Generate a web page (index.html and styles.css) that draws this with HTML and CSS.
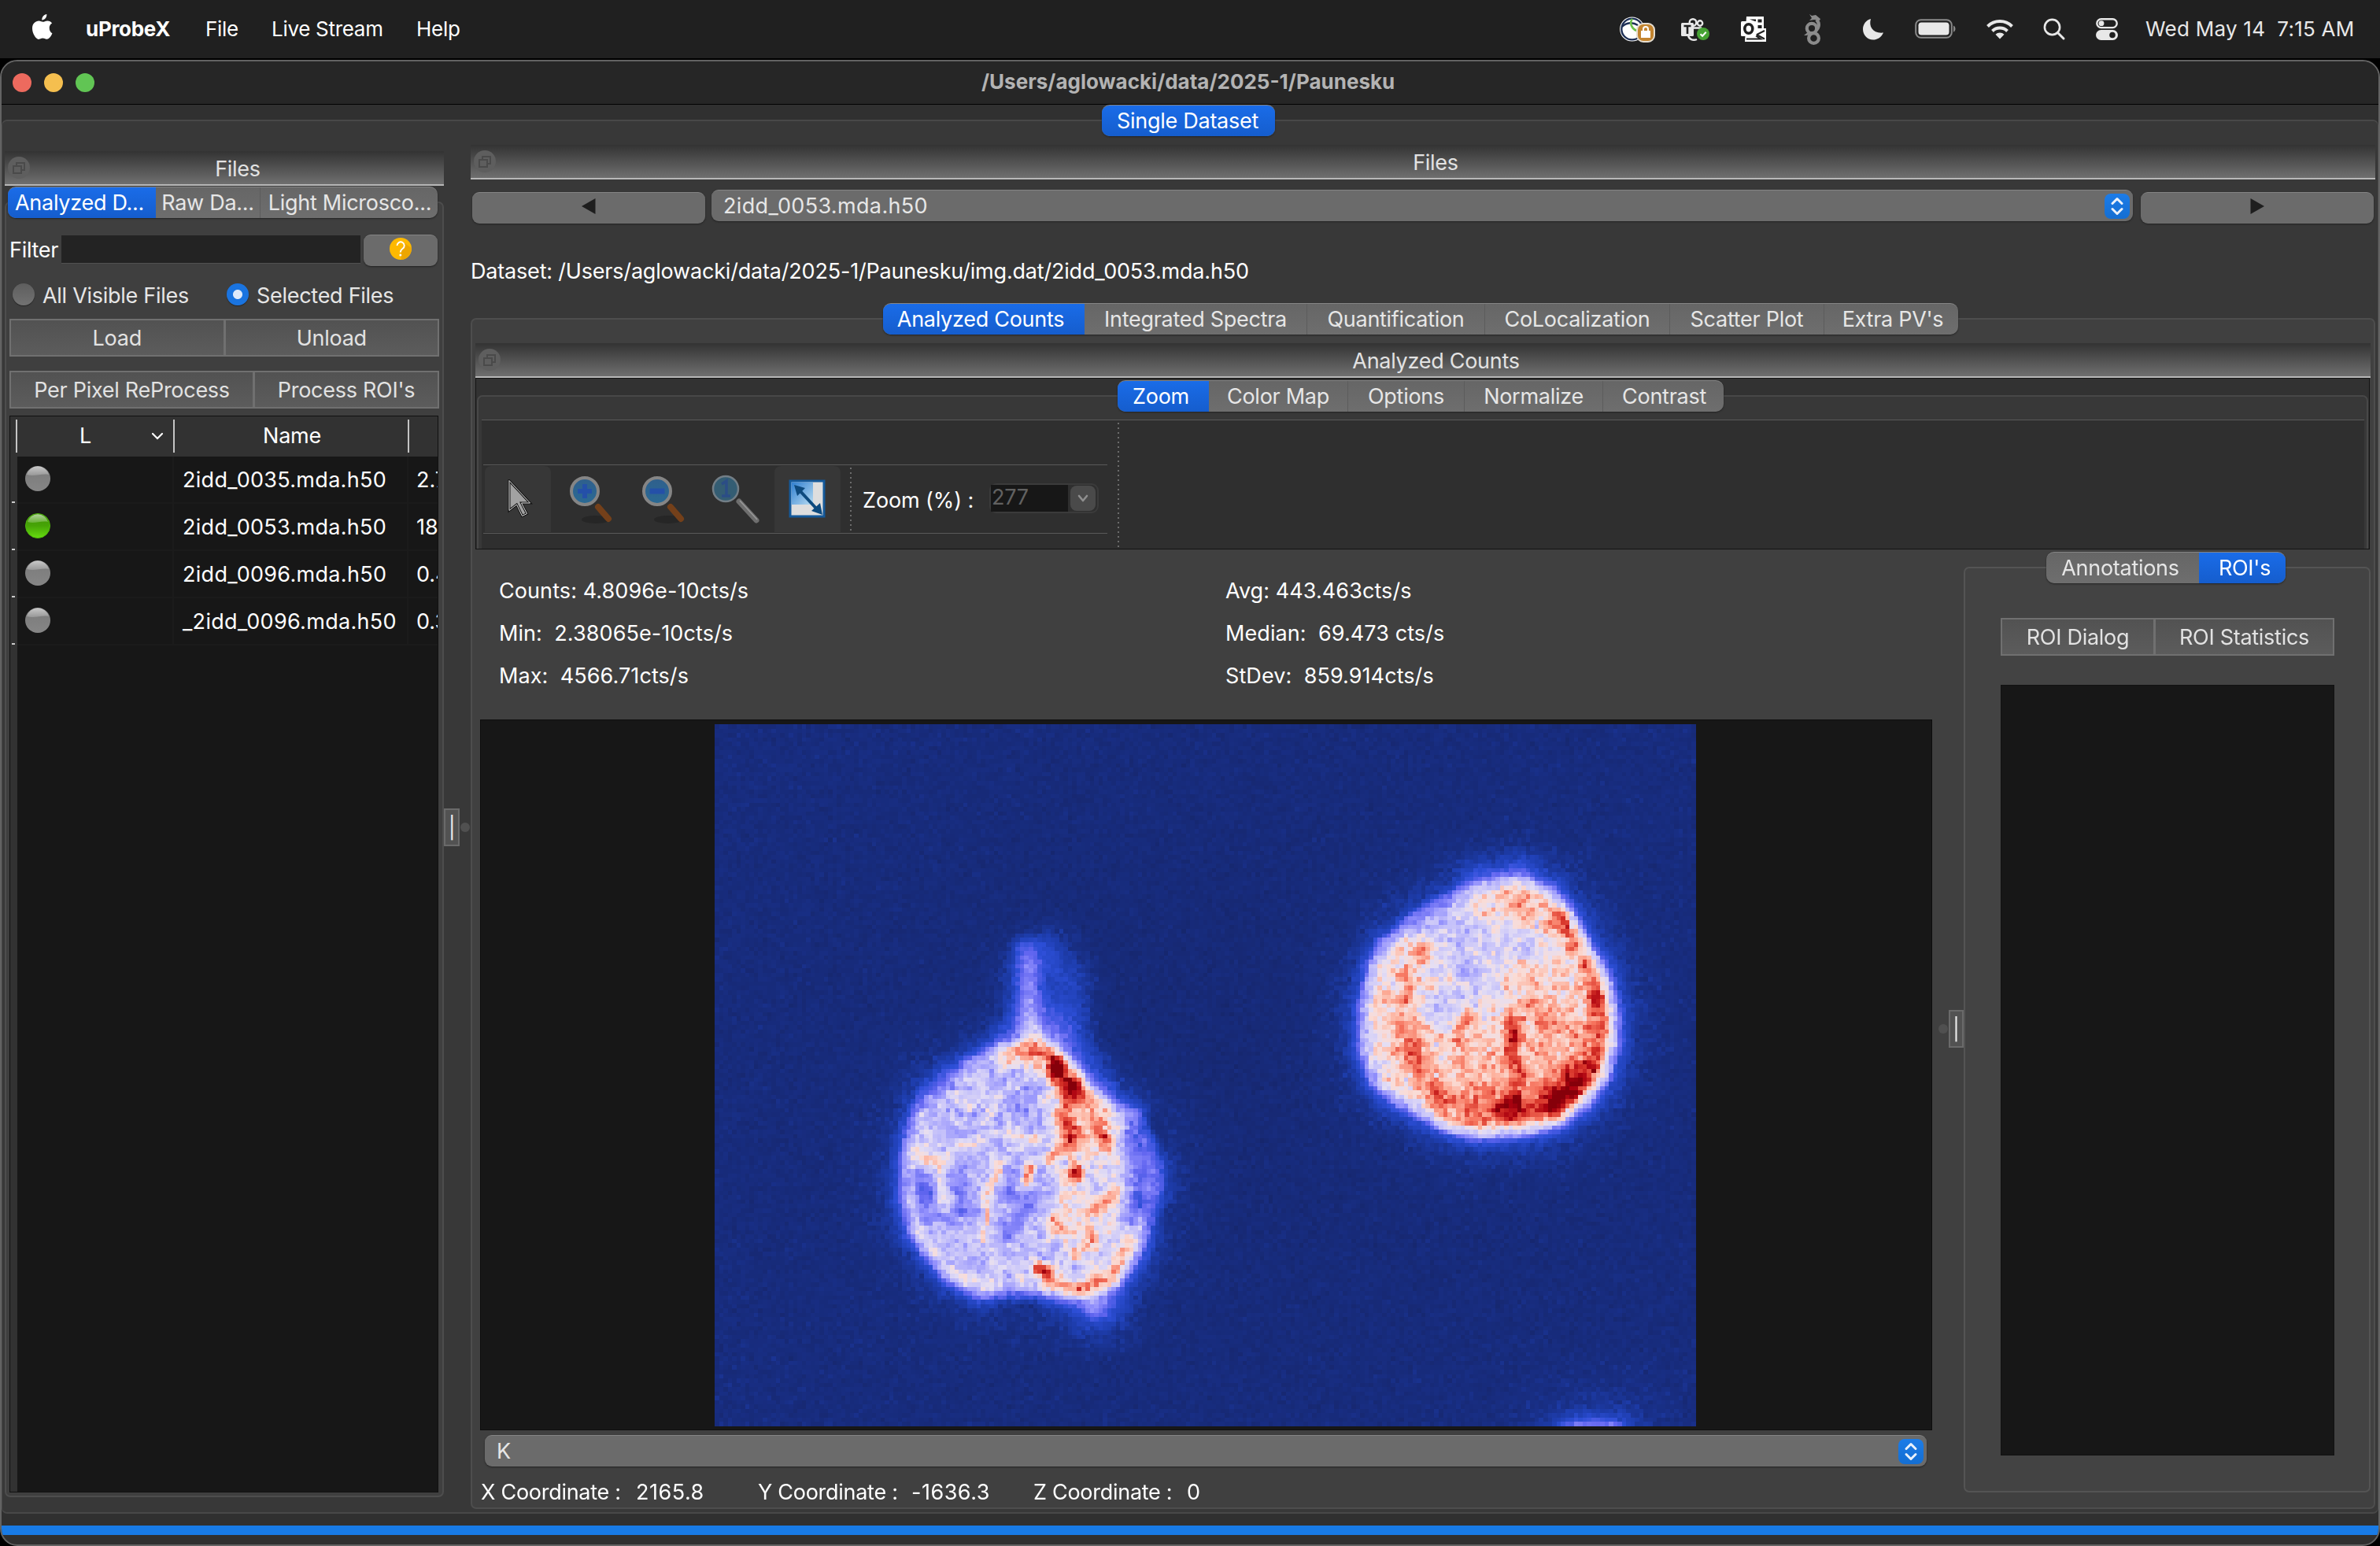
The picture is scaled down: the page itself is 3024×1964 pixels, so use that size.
FILE: index.html
```html
<!DOCTYPE html>
<html lang="en">
<head>
<meta charset="utf-8">
<title>uProbeX</title>
<link rel="stylesheet" href="styles.css">
</head>
<body>
<svg class="defs" width="0" height="0" aria-hidden="true">
  <defs>
    <linearGradient id="ballGray" x1="0" y1="0" x2="0" y2="1"><stop offset="0" stop-color="#7a7a7a"/><stop offset="1" stop-color="#868686"/></linearGradient>
    <linearGradient id="ballGreen" x1="0" y1="0" x2="0" y2="1"><stop offset="0" stop-color="#3f9208"/><stop offset=".5" stop-color="#46a406"/><stop offset="1" stop-color="#66dd10"/></linearGradient>
    <linearGradient id="gloss" x1="0" y1="0" x2="0" y2="1"><stop offset="0" stop-color="#fff" stop-opacity=".6"/><stop offset="1" stop-color="#fff" stop-opacity=".2"/></linearGradient>
    <linearGradient id="lens" x1="0" y1="0" x2="0" y2="1"><stop offset="0" stop-color="#2f5f8c"/><stop offset="1" stop-color="#2a6a94"/></linearGradient>
    <linearGradient id="sky" x1="0" y1="0" x2="1" y2="1"><stop offset="0" stop-color="#2f7fd0"/><stop offset="1" stop-color="#b8dcf2"/></linearGradient>
    <symbol id="float" viewBox="0 0 28 28"><circle cx="14" cy="14" r="14" fill="#5e5e5e"/><path d="M11 12V8h10v9h-4M7 12h10v9H7z" fill="none" stroke="#4a4a4a" stroke-width="2"/></symbol>
    <symbol id="ball-off" viewBox="0 0 32 32"><circle cx="16" cy="16" r="16" fill="url(#ballGray)"/><path d="M2 11a14.5 14.5 0 0 1 28 0c-9-2-18 3-28 0z" fill="url(#gloss)"/></symbol>
    <symbol id="ball-on" viewBox="0 0 32 32"><circle cx="16" cy="16" r="15.5" fill="url(#ballGreen)" stroke="#4fb50c"/><path d="M3 11a13.5 13.5 0 0 1 26 0c-9-2-17 3-26 0z" fill="url(#gloss)"/></symbol>
    <symbol id="step" viewBox="0 0 32 32"><path d="M10 12.5L16 6.500l6 6M10 19.500l6 6 6-6" fill="none" stroke="#e9f1fb" stroke-width="3" stroke-linecap="round" stroke-linejoin="round"/></symbol>
  </defs>
</svg>

<header class="menubar">
  <svg class="apple" viewBox="0 0 26 32"><path fill="#fff" d="M18.300 0c.3 2-.5 3.900-1.600 5.300-1.200 1.400-2.900 2.300-4.400 2.200-.3-1.900.6-3.900 1.600-5.100C15.100 1 16.900.100 18.300 0zM21.700 17.200c0-2.600 1.300-4.500 3.400-5.800-1.300-1.900-3.300-2.900-5.600-3-2.400-.2-4.500 1.400-5.900 1.400-1.400 0-3.200-1.300-5.200-1.300C4.300 8.600 0 11.700 0 18c0 6.500 4.600 13.800 8.100 13.900 1.900 0 2.700-1.300 5.100-1.300 2.500 0 3.100 1.300 5.200 1.200 3.300-.1 6.200-5.100 7-7.600-2.400-1.200-3.700-3.500-3.700-7z"/></svg>
  <b class="app">uProbeX</b><span class="m-file">File</span><span class="m-live">Live Stream</span><span class="m-help">Help</span>
  <span class="grow"></span>
  <svg class="i-globe" viewBox="0 0 48 34"><circle cx="17.700" cy="17" r="15.600" fill="#fff"/><circle cx="17.700" cy="17" r="13.400" fill="none" stroke="#1d2f55" stroke-width="2.400"/><path d="M5 14c6-6 14-6 20-2" fill="none" stroke="#1d2f55" stroke-width="2.400"/><path d="M18 4c-4 5-1 12 5 15" fill="none" stroke="#6cc04a" stroke-width="2.600"/><rect x="24" y="10" width="22" height="23" rx="8" fill="#c3842f" stroke="#e6ded2" stroke-width="2"/><path d="M29 19h12v9H29z" fill="#fff"/><path d="M32 20v-3a3 3 0 0 1 6 0v3" fill="none" stroke="#fff" stroke-width="2"/></svg>
  <svg class="i-teams" viewBox="0 0 40 34"><g fill="none" stroke="#e8e8e8" stroke-width="2.400"><circle cx="17" cy="8.500" r="4.300"/><circle cx="26" cy="9.500" r="3.200"/><path d="M18 15.500h9v3M11 25c1 5 6 7 11 5"/></g><rect x="2" y="9" width="16" height="17" rx="1.500" fill="#e8e8e8"/><path d="M5.500 13h9M10 13v10" stroke="#202020" stroke-width="2.600"/><circle cx="30" cy="23" r="8" fill="#46a233"/><path d="M26.500 23.200l2.600 2.600 4.600-5" fill="none" stroke="#fff" stroke-width="2"/></svg>
  <svg class="i-outlook" viewBox="0 0 34 34"><path d="M8 1h22v15l3 0v17H6z" fill="#fff"/><path d="M12 4.500h8v3M22.500 4.500h5v4h-5zM22.500 12h5v4h-5z" fill="#202020"/><path d="M8 29.500h18L20 25.500M31 19l-10 5 10 5.500" fill="none" stroke="#202020" stroke-width="2"/><rect x="1" y="7" width="19.500" height="19" rx="1.500" fill="#fff"/><ellipse cx="10.800" cy="16.500" rx="5" ry="5.800" fill="none" stroke="#202020" stroke-width="3.600"/></svg>
  <svg class="i-dragon" viewBox="0 0 26 40"><g fill="none" stroke="#8b8b8b" stroke-width="4.200"><circle cx="12" cy="19" r="6.200"/><circle cx="14.500" cy="31.500" r="6.400"/><path d="M17 22c5-4 5-10 1-14"/></g><path d="M9 1l3 2 5-1 6 5-1 2-7-1-6 1 3-3zM2 28l5-4 2 3-4 1z" fill="#8b8b8b"/></svg>
  <svg class="i-moon" viewBox="0 0 28 28"><path fill="#e8e8e8" d="M11 1C8 11 14 20 27 18.500 24 25 19 27.500 14 27.500 6.500 27.500 1 21.500 1 14 1 8 5 2.500 11 1z"/></svg>
  <svg class="i-battery" viewBox="0 0 54 26"><rect x="1.200" y="1.200" width="45.600" height="22.600" rx="6.500" fill="none" stroke="#8a8a8a" stroke-width="2"/><rect x="4.500" y="4.500" width="39" height="16" rx="3.800" fill="#e8e8e8"/><path d="M49 8.500c3.300 1.200 3.300 7 0 8.200z" fill="#8a8a8a"/></svg>
  <svg class="i-wifi" viewBox="0 0 36 26"><g fill="none" stroke="#e8e8e8" stroke-width="4"><path d="M2.500 9.500a22 22 0 0 1 31 0"/><path d="M8.500 15.500a13.500 13.500 0 0 1 19 0"/></g><path d="M12.500 19.800a7.800 7.800 0 0 1 11 0L18 25.500z" fill="#e8e8e8"/></svg>
  <svg class="i-search" viewBox="0 0 30 30"><circle cx="12.500" cy="12.500" r="9.600" fill="none" stroke="#e8e8e8" stroke-width="2.600"/><path d="M19.500 19.500l7.500 7.500" stroke="#e8e8e8" stroke-width="3" stroke-linecap="round"/></svg>
  <svg class="i-cc" viewBox="0 0 30 30"><rect x="2.300" y="2.300" width="25.400" height="10.800" rx="5.400" fill="none" stroke="#e8e8e8" stroke-width="2.400"/><circle cx="8" cy="7.700" r="3.400" fill="#e8e8e8"/><rect x="1" y="16" width="28" height="13" rx="6.500" fill="#e8e8e8"/><circle cx="22" cy="22.500" r="3.800" fill="#202020"/></svg>
  <span class="clock">Wed May 14&nbsp; 7:15 AM</span>
</header>

<div class="window">
  <div class="titlebar">
    <i class="light red"></i><i class="light yellow"></i><i class="light green"></i>
    <b>/Users/aglowacki/data/2025-1/Paunesku</b>
  </div>

  <main class="outer pane">
    <div class="tabs tabs-main"><span class="tab on">Single Dataset</span></div>
    <div class="cols">
      <aside class="files">
        <div class="dock-title"><svg><use href="#float"/></svg><span>Files</span></div>
        <section class="pane files-pane">
          <div class="tabs tabs-files"><span class="tab on">Analyzed D...</span><span class="tab">Raw Da...</span><span class="tab">Light Microsco...</span></div>
          <div class="filter"><label>Filter</label><i class="field"></i>
            <span class="btn help"><svg viewBox="0 0 28 28"><circle cx="14" cy="14" r="14" fill="#fdb900"/><path d="M18 6l9.500 7A14 14 0 0 1 15 28l-1-6z" fill="#eda600"/><path d="M9.500 10a4.600 4.600 0 1 1 7.200 3.800c-2 1.400-2.900 2.400-2.900 4.700" fill="none" stroke="#fff" stroke-width="2"/><circle cx="13.800" cy="22" r="1.500" fill="#fff"/></svg></span></div>
          <div class="radios"><i class="radio"></i><span class="r1">All Visible Files</span><i class="radio sel"></i><span>Selected Files</span></div>
          <div class="pair load"><span>Load</span><span>Unload</span></div>
          <div class="pair process"><span>Per Pixel ReProcess</span><span>Process ROI's</span></div>
          <div class="table">
            <div class="thead"><span class="c1">L<svg viewBox="0 0 16 10"><path d="M2 2l6 6 6-6" fill="none" stroke="#fff" stroke-width="2.200" stroke-linecap="round"/></svg></span><span class="c2">Name</span><span class="c3"></span></div>
            <div class="tbody">
              <div class="vhead"><i></i><i></i><i></i><i></i></div>
              <div class="rows">
                <div class="row"><span class="c1"><svg><use href="#ball-off"/></svg></span><span class="c2">2idd_0035.mda.h50</span><span class="c3">2.7</span></div>
                <div class="row"><span class="c1"><svg><use href="#ball-on"/></svg></span><span class="c2">2idd_0053.mda.h50</span><span class="c3">18</span></div>
                <div class="row"><span class="c1"><svg><use href="#ball-off"/></svg></span><span class="c2">2idd_0096.mda.h50</span><span class="c3">0.4</span></div>
                <div class="row"><span class="c1"><svg><use href="#ball-off"/></svg></span><span class="c2">_2idd_0096.mda.h50</span><span class="c3">0.3</span></div>
              </div>
            </div>
          </div>
        </section>
      </aside>

      <div class="splitter split-left"><i class="handle">|</i><i class="dot"></i></div>

      <section class="work">
        <div class="dock-title wide"><svg><use href="#float"/></svg><span>Files</span></div>
        <div class="picker">
          <span class="btn nav"><svg viewBox="0 0 18 20"><path d="M17.500 0v20L0 10z" fill="#1e1e1e"/></svg></span>
          <span class="btn combo"><span>2idd_0053.mda.h50</span><svg><use href="#step"/></svg></span>
          <span class="btn nav"><svg viewBox="0 0 18 20"><path d="M.5 0v20L18 10z" fill="#1e1e1e"/></svg></span>
        </div>
        <p class="dataset">Dataset: /Users/aglowacki/data/2025-1/Paunesku/img.dat/2idd_0053.mda.h50</p>

        <section class="pane data-pane">
          <div class="tabs tabs-data"><span class="tab on">Analyzed Counts</span><span class="tab">Integrated Spectra</span><span class="tab">Quantification</span><span class="tab">CoLocalization</span><span class="tab">Scatter Plot</span><span class="tab">Extra PV's</span></div>
          <div class="dock-title inner"><svg><use href="#float"/></svg><span>Analyzed Counts</span></div>
          <div class="frame">
            <div class="pane tool-pane">
              <div class="tabs tabs-tools"><span class="tab on">Zoom</span><span class="tab">Color Map</span><span class="tab">Options</span><span class="tab">Normalize</span><span class="tab">Contrast</span></div>
              <div class="toolarea">
                <div class="toolbar">
                  <span class="tool active cursor"><svg width="34" height="50" viewBox="0 0 34 50"><path d="M3 1.500v38l9.500-7.500 7 14.500 6-3-7-13.500h11z" fill="#a2a2a2" stroke="#151515" stroke-width="3"/><path d="M3 1.500v38l9.500-7.500 7 14.500 6-3-7-13.500h11z" fill="none" stroke="#dadada" stroke-width="1"/></svg></span>
                  <span class="tool"><svg width="60" height="64" viewBox="0 0 60 64"><ellipse cx="36" cy="57" rx="18" ry="5" fill="#262626"/><path d="M39 41l13 15" stroke="#74401a" stroke-width="8" stroke-linecap="round"/><circle cx="22" cy="21" r="17" fill="url(#lens)" stroke="#858585" stroke-width="4"/><path d="M22 12v18M13 21h18" stroke="#2450a8" stroke-width="6"/></svg></span>
                  <span class="tool"><svg width="60" height="64" viewBox="0 0 60 64"><ellipse cx="36" cy="57" rx="18" ry="5" fill="#262626"/><path d="M39 41l13 15" stroke="#74401a" stroke-width="8" stroke-linecap="round"/><circle cx="22" cy="21" r="17" fill="url(#lens)" stroke="#858585" stroke-width="4"/><path d="M12.500 21h19" stroke="#2450a8" stroke-width="7"/></svg></span>
                  <span class="tool"><svg width="64" height="66" viewBox="0 0 64 66"><path d="M36 35l22 24" stroke="#6e6e6e" stroke-width="7" stroke-linecap="round"/><path d="M37 34l22 24" stroke="#999" stroke-width="1.500"/><circle cx="19" cy="19" r="16" fill="#345d73" stroke="#737e86" stroke-width="2.500"/><path d="M14 13l6-4v19M14 28h11" fill="none" stroke="#2b4d86" stroke-width="3.500"/></svg></span>
                  <span class="tool active fit"><svg width="48" height="50" viewBox="0 0 48 50"><rect x="2" y="2" width="43" height="45" fill="#dedede" stroke="#14599a" stroke-width="3"/><path d="M3.500 3.500H31V32H3.500z" fill="url(#sky)"/><path d="M12 12l26 28" stroke="#0d4a7e" stroke-width="4"/><path d="M7 7l14 4-10 10zM43 45l-14-5 11-10z" fill="#0d4a7e"/></svg></span>
                  <i class="dots"></i>
                  <span class="zoomlabel">Zoom (%) :</span>
                  <span class="spin"><span>277</span><i><svg viewBox="0 0 32 32"><path d="M11 13l5 6 5-6" fill="none" stroke="#8f8f8f" stroke-width="2.600" stroke-linecap="round" stroke-linejoin="round"/></svg></i></span>
                </div>
                <i class="dots"></i>
              </div>
            </div>
          </div>

          <div class="lower">
            <div class="viewer">
              <div class="stats">
                <span>Counts: 4.8096e-10cts/s</span><span>Avg: 443.463cts/s</span>
                <span>Min:&nbsp; 2.38065e-10cts/s</span><span>Median:&nbsp; 69.473 cts/s</span>
                <span>Max:&nbsp; 4566.71cts/s</span><span>StDev:&nbsp; 859.914cts/s</span>
              </div>
              <div class="view"><canvas id="map" width="225" height="161"></canvas></div>
              <span class="btn combo element"><span>K</span><svg><use href="#step"/></svg></span>
              <div class="coords"><span>X Coordinate :</span><span class="num">2165.8</span><span>Y Coordinate :</span><span class="num">-1636.3</span><span>Z Coordinate :</span><span class="num">0</span></div>
            </div>
            <div class="splitter split-right"><i class="dot"></i><i class="handle">|</i></div>
            <section class="pane roi">
              <div class="tabs tabs-roi"><span class="tab">Annotations</span><span class="tab on">ROI's</span></div>
              <div class="pair roi-buttons"><span>ROI Dialog</span><span>ROI Statistics</span></div>
              <div class="list"></div>
            </section>
          </div>
        </section>
      </section>
    </div>
  </main>
  <div class="progress"></div>
</div>
<script src="map.js"></script>
</body>
</html>
```

FILE: styles.css
```css
* { box-sizing: border-box; }
body { margin: 0; background: #000; width: 3024px; height: 1964px; overflow: hidden; color: #fff;
  font: 27px/40px Inter, "Liberation Sans", sans-serif; letter-spacing: -0.28px; white-space: nowrap; }
i { font-style: normal; }
svg { display: block; flex: none; }
.defs { position: absolute; }

/* macOS menu bar */
.menubar { display: flex; align-items: center; height: 74px; background: #202020; padding: 0 34px 0 41px; font-size: 26px; letter-spacing: -0.3px; }
.apple { width: 26px; height: 32px; margin: -6px 42px 0 0; }
.menubar > b, .menubar > span { flex: none; }
.menubar > .grow { flex: 1; }
.app { width: 152px; font-weight: 700; }
.m-file { width: 84px; }
.m-live { width: 184px; }
.i-globe { width: 48px; height: 34px; margin-right: 30px; }
.i-teams { width: 40px; height: 34px; margin-right: 37px; }
.i-outlook { width: 34px; height: 34px; margin-right: 45px; }
.i-dragon { width: 26px; height: 40px; margin-right: 50px; }
.i-moon { width: 28px; height: 28px; margin-right: 39px; }
.i-battery { width: 54px; height: 26px; margin-right: 36px; }
.i-wifi { width: 36px; height: 26px; margin-right: 36px; }
.i-search { width: 30px; height: 30px; margin-right: 37px; }
.i-cc { width: 30px; height: 30px; margin-right: 34px; }
.clock { width: 264px; color: #e8e8e8; letter-spacing: 0.25px; }

/* window */
.window { margin-top: 2px; height: 1888px; border: 2px solid #636363; border-radius: 22px; background: #303030; overflow: hidden; }
.titlebar { display: flex; align-items: center; height: 55px; padding-left: 14px; gap: 16px; background: #262626; border-bottom: 1px solid #000; }
.titlebar b { margin: -3px 0 0 1111px; color: #b3b3b3; font-size: 26px; font-weight: 700; letter-spacing: 0; }
.light { width: 24px; height: 24px; border-radius: 50%; }
.red { background: #ed6a5e; }
.yellow { background: #f5bf4f; }
.green { background: #61c554; }
.pane { border: 2px solid #4d4d4d; border-radius: 7px; }
.outer { margin-top: 19px; height: 1771px; background: #383838; border-color: #484848; border-width: 2px 1px; }
.progress { margin-top: 15px; height: 12px; background: #187be6; }
.cols { display: flex; align-items: flex-start; padding-left: 3px; }

/* segmented tabs straddle the top edge of their pane */
.tabs { display: flex; height: 40px; margin: -21px auto 0; border-radius: 10px; overflow: hidden; background: linear-gradient(#666, #6e6e6e); border-top: 1px solid #858585; box-shadow: 0 1px 2px #222; position: relative; }
.tab { flex: none; text-align: center; color: #e6e6e6; line-height: 40px; border-left: 1px solid #5c5c5c; }
.tab:first-child, .on + .tab { border-left: 0; }
.tab.on { color: #fff; background: linear-gradient(#1a6ce8, #155dcd); border-left: 0; }
.tabs-main { width: 220px; margin-left: 1397px; }
.tabs-main .tab { width: 220px; padding-right: 2px; }
.tabs-files { width: 546px; margin-left: 2px; }
.tabs-files .tab:nth-child(1) { width: 188px; padding-right: 6px; }
.tabs-files .tab:nth-child(2) { width: 132px; }
.tabs-files .tab:nth-child(3) { width: 226px; padding-left: 2px; }
.tabs-data { width: 1366px; margin-left: 522px; }
.tabs-data .tab:nth-child(1) { width: 256px; padding-right: 8px; }
.tabs-data .tab:nth-child(2) { width: 282px; }
.tabs-data .tab:nth-child(3) { width: 226px; }
.tabs-data .tab:nth-child(4) { width: 235px; }
.tabs-data .tab:nth-child(5) { width: 196px; }
.tabs-data .tab:nth-child(6) { width: 171px; padding-left: 4px; }
.tabs-tools { width: 770px; margin-left: 812px; }
.tabs-tools .tab:nth-child(1) { width: 116px; padding-right: 6px; }
.tabs-tools .tab:nth-child(2) { width: 176px; }
.tabs-tools .tab:nth-child(3) { width: 148px; }
.tabs-tools .tab:nth-child(4) { width: 176px; }
.tabs-tools .tab:nth-child(5) { width: 154px; padding-left: 2px; }
.tabs-roi { width: 304px; margin-left: 103px; }
.tabs-roi .tab:nth-child(1) { width: 194px; padding-right: 6px; }
.tabs-roi .tab:nth-child(2) { width: 110px; padding-left: 6px; }

.dock-title { display: flex; align-items: center; height: 44px; padding-left: 4px; color: #e2e2e2; background: linear-gradient(#333, #6f6f6f); border-bottom: 2px solid #b8b8b8; }
.dock-title svg { width: 28px; height: 28px; margin-top: -1px; }
.dock-title span { flex: 1; text-align: center; padding-top: 4px; }

.btn { display: flex; align-items: center; height: 40px; border-radius: 9px; background: #6b6b6b; border-top: 1px solid #858585; box-shadow: 0 1px 2px #222; }
.pair { display: flex; height: 48px; border: 2px solid #707070; }
.pair span { text-align: center; line-height: 46px; color: #e2e2e2; background: linear-gradient(#525252, #5c5c5c); flex: 1; }
.pair span + span { border-left: 3px solid #707070; }

/* file list dock */
.files { width: 558px; margin-top: 19px; flex: none; }
.files .dock-title span { padding-left: 2px; }
.files-pane { margin-top: 20px; height: 1646px; background: #3f3f3f; }
.filter { display: flex; margin-top: 21px; padding-left: 4px; }
.filter label { width: 66px; }
.field { width: 380px; height: 36px; margin-top: 1px; background: #232323; border-bottom: 1px solid #505050; }
.help { width: 94px; margin-left: 4px; padding-left: 33px; }
.help svg { width: 28px; height: 28px; margin-top: -5px; }
.radios { display: flex; align-items: center; height: 40px; margin-top: 16px; padding-left: 8px; color: #e6e6e6; }
.radios span { padding-top: 3px; }
.radio { width: 28px; height: 28px; margin-right: 10px; border-radius: 50%; background: linear-gradient(#5e5e5e, #727272); box-shadow: 0 1px 1px #222; flex: none; }
.radio.sel { background: radial-gradient(circle, #dfeafa 5.5px, #1a74e0 6.5px); }
.r1 { width: 234px; }
.load, .process { width: 546px; margin-left: 4px; }
.load { margin-top: 11px; }
.process { margin-top: 18px; }
.process span:first-child { flex: none; width: 307px; }
.table { margin: 9px 0 0 4px; width: 545px; height: 1368px; border: 1px solid #111; background: #171717; display: flex; flex-direction: column; overflow: hidden; }
.thead { display: flex; height: 51px; background: #323232; padding: 4px 0 5px 7px; flex: none; }
.thead span { border-left: 2px solid #c4c4c4; text-align: center; line-height: 42px; flex: none; }
.thead .c1 { width: 200px; display: flex; align-items: center; justify-content: flex-end; gap: 76px; padding-right: 12px; }
.thead .c1 svg { width: 16px; height: 10px; }
.thead .c2 { width: 298px; padding-left: 2px; }
.thead .c3 { width: 40px; }
.tbody { display: flex; flex: 1; }
.vhead { flex: none; width: 9px; background: #323232; padding-top: 57px; }
.vhead i { display: block; width: 4px; height: 2px; margin: 0 0 58px 2px; background: #ccc; }
.rows { width: 534px; overflow: hidden; flex: none; }
.row { display: flex; height: 60px; border-bottom: 2px solid #1b1b1b; line-height: 59px; }
.row span { flex: none; border-right: 2px solid #1b1b1b; }
.row .c1 { width: 199px; padding: 12px 0 0 10px; }
.row .c1 svg { width: 32px; height: 32px; }
.row .c2 { width: 298px; padding-left: 11px; letter-spacing: 0.3px; }
.row .c3 { width: 60px; padding-left: 10px; letter-spacing: 0; }

/* splitter grips */
.splitter { display: flex; align-items: flex-start; flex: none; }
.split-left { width: 34px; margin-top: 854px; }
.split-right { width: 40px; margin-top: 585px; padding-left: 7px; }
.handle { width: 20px; height: 48px; border: 2px solid #6a6a6a; background: #525252; text-align: center; line-height: 46px; color: #e8e8e8; }
.dot { width: 12px; height: 12px; margin: 18px 1px 0 1px; border-radius: 50%; background: #505050; }

/* dataset area */
.work { width: 2420px; margin-top: 11px; flex: none; }
.picker { display: flex; align-items: flex-start; margin: 13px 0 0 2px; }
.nav { width: 296px; margin-top: 3px; justify-content: center; }
.nav svg { width: 18px; height: 20px; margin-top: -6px; }
.combo { width: 1806px; margin: 0 10px 0 8px; padding: 0 4px 0 15px; justify-content: space-between; color: #e6e6e6; letter-spacing: 0.35px; }
.combo svg { width: 32px; height: 32px; border-radius: 8px; background: linear-gradient(#1c7ce8, #146ed2); }
.dataset { margin: 41px 0 0; height: 40px; letter-spacing: -0.19px; }
.data-pane { margin-top: 39px; height: 1513px; background: #404040; }
.inner { margin: 11px 0 0 4px; width: 2408px; }
.inner span { padding-left: 1px; }
.frame { margin-left: 4px; width: 2407px; height: 218px; border: 1px solid #141414; background: #323232; overflow: hidden; }
.tool-pane { margin: 21px 1px 0 1px; height: 240px; background: #383838; border-color: #484848; }
.toolarea { display: flex; margin: 10px 3px 0 4px; height: 164px; border-top: 1px solid #5a5a5a; background: #2f2f2f; }
.toolbar { display: flex; width: 793px; height: 88px; margin: 56px 13px 0 2px; border: solid #5a5a5a; border-width: 1px 0; padding: 1px 0 0 2px; }
.tool { width: 92px; display: flex; align-items: center; justify-content: center; }
.tool.active { width: 84px; height: 84px; background: #373737; border-radius: 8px 8px 0 0; }
.tool.cursor { padding-left: 6px; }
.tool.active + .tool { margin-left: 5px; }
.tool.fit { margin-left: 3px; }
.dots { width: 2px; background: repeating-linear-gradient(#6c6c6c 0 2px, transparent 2px 6px); margin-top: 3px; flex: none; }
.toolbar .dots { margin: 2px 0 2px 12px; }
.zoomlabel { width: 161px; margin: 24px 0 0 14px; letter-spacing: -0.1px; }
.spin { display: flex; width: 139px; height: 38px; margin-top: 22px; border: 2px solid #3b3b3b; border-radius: 9px; }
.spin span { width: 98px; height: 34px; line-height: 31px; padding-left: 1px; color: #616161; background: #171717; }
.spin i { width: 32px; height: 32px; margin: 1px 0 0 3px; border-radius: 8px; background: #4a4a4a; }

.lower { display: flex; align-items: flex-start; padding-left: 10px; }
.viewer { width: 1845px; flex: none; }
.stats { display: grid; grid-template-columns: 923px 1fr; grid-auto-rows: 54px; line-height: 55px; margin: 25px 0 0 24px; letter-spacing: 0.08px; }
.view { margin-top: 29px; height: 903px; background: #171717; border: 1px solid #0d0d0d; padding: 5px 0 0 297px; }
.view canvas { display: block; width: 1247px; height: 892px; image-rendering: pixelated; }
.element { width: 1832px; margin: 6px 0 0 6px; }
.coords { display: grid; grid-template-columns: 197px 155px 195px 155px 195px 1fr; margin: 13px 0 0 1px; }
.coords .num { letter-spacing: 0.5px; }
.roi { width: 517px; height: 1176px; margin-top: 22px; background: #434343; border-color: #545454; }
.roi-buttons { width: 424px; margin: 44px 0 0 45px; }
.roi-buttons span:first-child { flex: none; width: 192px; }
.list { width: 424px; height: 979px; margin: 37px 0 0 45px; border: 1px solid #111; background: #171717; }
```

FILE: map.js
```js
// Potassium fluorescence map: two cells on a noisy background, 225 x 161 samples.
const W = 225, H = 161;
const px = ([x, y]) => [(x - 10) / 6.9, (y - 16) / 9.55];

let seed = 53;
const rnd = () => {
  seed = (seed * 1664525 + 1013904223) >>> 0;
  return seed / 4294967296;
};
const gauss = () => rnd() + rnd() + rnd() - 1.5;

// Smooth value noise for the texture inside the cells.
const lattice = Array.from({ length: 64 * 64 }, rnd);
function noise(x, y) {
  const i = Math.floor(x), j = Math.floor(y), u = x - i, v = y - j;
  const at = (a, b) => lattice[((b & 63) << 6) + (a & 63)];
  const a = at(i, j) * (1 - u) + at(i + 1, j) * u;
  const b = at(i, j + 1) * (1 - u) + at(i + 1, j + 1) * u;
  return a * (1 - v) + b * v - 0.5;
}

function segDist(x, y, [ax, ay], [bx, by]) {
  const dx = bx - ax, dy = by - ay, l = dx * dx + dy * dy;
  const t = l ? Math.max(0, Math.min(1, ((x - ax) * dx + (y - ay) * dy) / l)) : 0;
  return Math.hypot(x - ax - t * dx, y - ay - t * dy);
}
function lineDist(x, y, pts) {
  let d = pts.length === 1 ? segDist(x, y, pts[0], pts[0]) : 1e9;
  for (let i = 1; i < pts.length; i++) d = Math.min(d, segDist(x, y, pts[i - 1], pts[i]));
  return d;
}
// Positive inside the polygon, negative outside.
function polyDist(x, y, pts) {
  let inside = false, d = 1e9;
  for (let i = 0, j = pts.length - 1; i < pts.length; j = i++) {
    const [ax, ay] = pts[i], [bx, by] = pts[j];
    if ((ay > y) !== (by > y) && x < ((bx - ax) * (y - ay)) / (by - ay) + ax) inside = !inside;
    d = Math.min(d, segDist(x, y, pts[i], pts[j]));
  }
  return inside ? d : -d;
}

const cells = [
  { base: 0.54, halo: 0.34, glow: 0.12, rim: 0.03,
    pts: [[455,718],[545,714],[570,745],[605,805],[645,845],[682,865],[702,920],[718,980],[716,1050],[700,1110],[688,1170],[665,1220],[640,1255],[590,1272],[510,1274],[430,1270],[380,1235],[345,1180],[318,1130],[305,1060],[305,970],[318,890],[335,820],[380,770],[430,738]] },
  { base: 0.685, halo: 0.42, glow: 0.16, rim: -0.05,
    pts: [[1285,350],[1335,378],[1368,430],[1393,500],[1422,560],[1437,640],[1437,720],[1422,790],[1390,850],[1345,894],[1290,914],[1215,920],[1165,904],[1120,869],[1078,838],[1050,800],[1033,730],[1033,640],[1045,550],[1068,490],[1112,437],[1165,393],[1220,365]] },
  { base: 0.5, halo: 0.3, glow: 0.12, rim: 0,
    pts: [[1350,1560],[1375,1548],[1410,1543],[1440,1552],[1450,1570],[1400,1600]] }
].map(c => ({ ...c, pts: c.pts.map(px) }));

// Strokes: points, half width in samples, amount added at the centre.
const strokes = [
  // stalk
  [[[503,515],[510,700]], 3, 0.2], [[[510,560],[512,700]], 6.5, 0.13],
  [[[475,700],[545,700]], 4, 0.06], [[[510,640],[512,690]], 4, 0.07],
  [[[540,510],[580,580],[570,640]], 5, 0.11], [[[570,700],[620,810]], 4.5, 0.12],
  // left cell, right lobe
  [[[690,910],[697,980],[692,1070]], 4, -0.17], [[[672,900],[678,1000],[672,1090]], 2.5, -0.08],
  // left cell, bright ridge
  [[[470,740],[530,732],[550,755]], 2.2, 0.13],
  [[[548,765],[590,830],[618,880],[628,930]], 2.8, 0.15],
  [[[545,775],[568,805]], 3, 0.2], [[[560,875],[572,900]], 2.6, 0.18], [[[570,820],[565,930],[610,905]], 3.6, 0.15],
  [[[535,970],[575,925]], 1.1, 0.18], [[[625,920],[645,980],[650,1060],[640,1120]], 1.4, 0.1],
  [[[460,835],[440,885]], 1.2, 0.14], [[[462,975],[442,1040],[438,1140]], 1.3, 0.16],
  [[[320,940],[350,970],[400,945],[430,930]], 1.4, 0.1], [[[370,980],[368,1050],[390,1110]], 1.3, 0.1],
  [[[485,915],[520,925]], 1.4, 0.17], [[[507,990],[507,1015]], 1.3, 0.26], [[[583,1000]], 1.7, 0.28],
  [[[640,1040],[625,1075],[600,1085]], 1.5, 0.19], [[[545,1100],[560,1125],[540,1130]], 1.3, 0.15],
  [[[605,1120],[605,1145],[580,1170]], 1.4, 0.15], [[[580,940],[570,1060],[560,1100]], 2.6, 0.07],
  [[[520,1205],[535,1217]], 1.7, 0.3], [[[540,1240],[580,1258],[640,1225],[660,1160]], 2, 0.19],
  [[[590,1020],[600,1220]], 9, 0.06], [[[330,1130],[375,1215],[420,1255],[500,1240]], 2, 0.09],
  [[[345,1060],[335,1010]], 2.4, -0.2], [[[400,1000],[405,1080],[380,1100]], 2.6, -0.14],
  [[[470,1130],[525,1040]], 2.2, -0.16], [[[505,840]], 3, -0.12], [[[340,830],[390,775]], 2.4, -0.14],
  [[[470,1265],[510,1275]], 3, -0.14], [[[612,1290]], 3.5, 0.2], [[[620,1310]], 7, 0.08],
  [[[475,1040],[480,1000]], 1.8, -0.12],
  // right cell
  [[[1180,480],[1210,590],[1170,640]], 7, -0.13], [[[1280,510]], 6, -0.09],
  [[[1095,475],[1165,410]], 4, -0.1], [[[1210,350],[1290,335]], 4, 0.06],
  [[[1130,490],[1110,580],[1100,690],[1115,760]], 2, 0.07],
  [[[1270,395],[1335,420],[1360,480]], 3, 0.05],
  [[[1345,430],[1385,520],[1408,610],[1412,690],[1395,770],[1350,840]], 2.4, 0.14],
  [[[1408,620],[1408,700]], 2, 0.06],
  [[[1390,780],[1340,850],[1275,868],[1200,860],[1145,815],[1120,740]], 4, 0.13],
  [[[1350,820],[1365,785]], 3.2, 0.11], [[[1265,845],[1330,865]], 3, 0.1],
  [[[1272,670],[1273,720],[1282,780],[1275,840]], 1.8, 0.16], [[[1272,680],[1275,715]], 1.3, 0.07],
  [[[1115,670],[1150,695],[1182,712],[1200,640]], 1.4, 0.12],
  [[[1290,570],[1300,640],[1340,690],[1380,680]], 1.8, 0.07],
  [[[1210,700],[1230,790]], 7, 0.06], [[[1330,700],[1320,800]], 7, 0.06],
  [[[1220,905],[1160,885]], 2.4, 0.06], [[[1160,740]], 3, -0.1]
].map(([p, w, a]) => [p.map(px), w, a]);

const ramp = [
  [0, 22, 38, 108], [0.08, 24, 46, 132], [0.15, 30, 62, 176], [0.24, 44, 78, 214],
  [0.34, 98, 102, 240], [0.44, 146, 144, 252], [0.54, 196, 192, 250], [0.62, 228, 222, 244],
  [0.68, 250, 220, 214], [0.75, 253, 178, 158], [0.82, 246, 116, 94], [0.90, 214, 50, 40],
  [0.96, 172, 2, 16], [1, 134, 0, 10]
];
function color(v) {
  v = Math.max(0, Math.min(0.9999, v));
  let k = 1;
  while (ramp[k][0] < v) k++;
  const a = ramp[k - 1], b = ramp[k], t = (v - a[0]) / (b[0] - a[0]);
  return [1, 2, 3].map(n => a[n] + (b[n] - a[n]) * t);
}

const ctx = document.getElementById('map').getContext('2d');
const img = ctx.createImageData(W, H);
for (let j = 0; j < H; j++) {
  for (let i = 0; i < W; i++) {
    const x = i + 0.5, y = j + 0.5;
    let v = 0.035 + 0.04 * Math.hypot((x - 115) / W, (y - 75) / H);
    let body = 0;
    for (const c of cells) {
      const d = polyDist(x, y, c.pts);
      if (d < -30) continue;
      if (d < 0) v += (c.halo - c.glow) * Math.exp(d / 1.2) + c.glow * Math.exp(d / 5);
      else {
        body = Math.min(1, d / 3);
        v = c.halo + 0.04 + (c.base - c.halo - 0.04) * Math.min(1, d / 2.5) + c.rim * Math.exp(-((d - 2) ** 2));
      }
    }
    for (const [p, w, a] of strokes) {
      const d = lineDist(x, y, p);
      if (d < w * 3) v += a * Math.exp(-((d / w) ** 2));
    }
    v += body * (0.12 * noise(x / 2.6, y / 2.6) + 0.14 * noise(x / 1.3 + 20, y / 1.3));
    v += gauss() * (0.025 + 0.05 * Math.min(1, v * 1.7));
    const o = (j * W + i) * 4, rgb = color(v);
    img.data[o] = rgb[0];
    img.data[o + 1] = rgb[1];
    img.data[o + 2] = rgb[2];
    img.data[o + 3] = 255;
  }
}
ctx.putImageData(img, 0, 0);
```
